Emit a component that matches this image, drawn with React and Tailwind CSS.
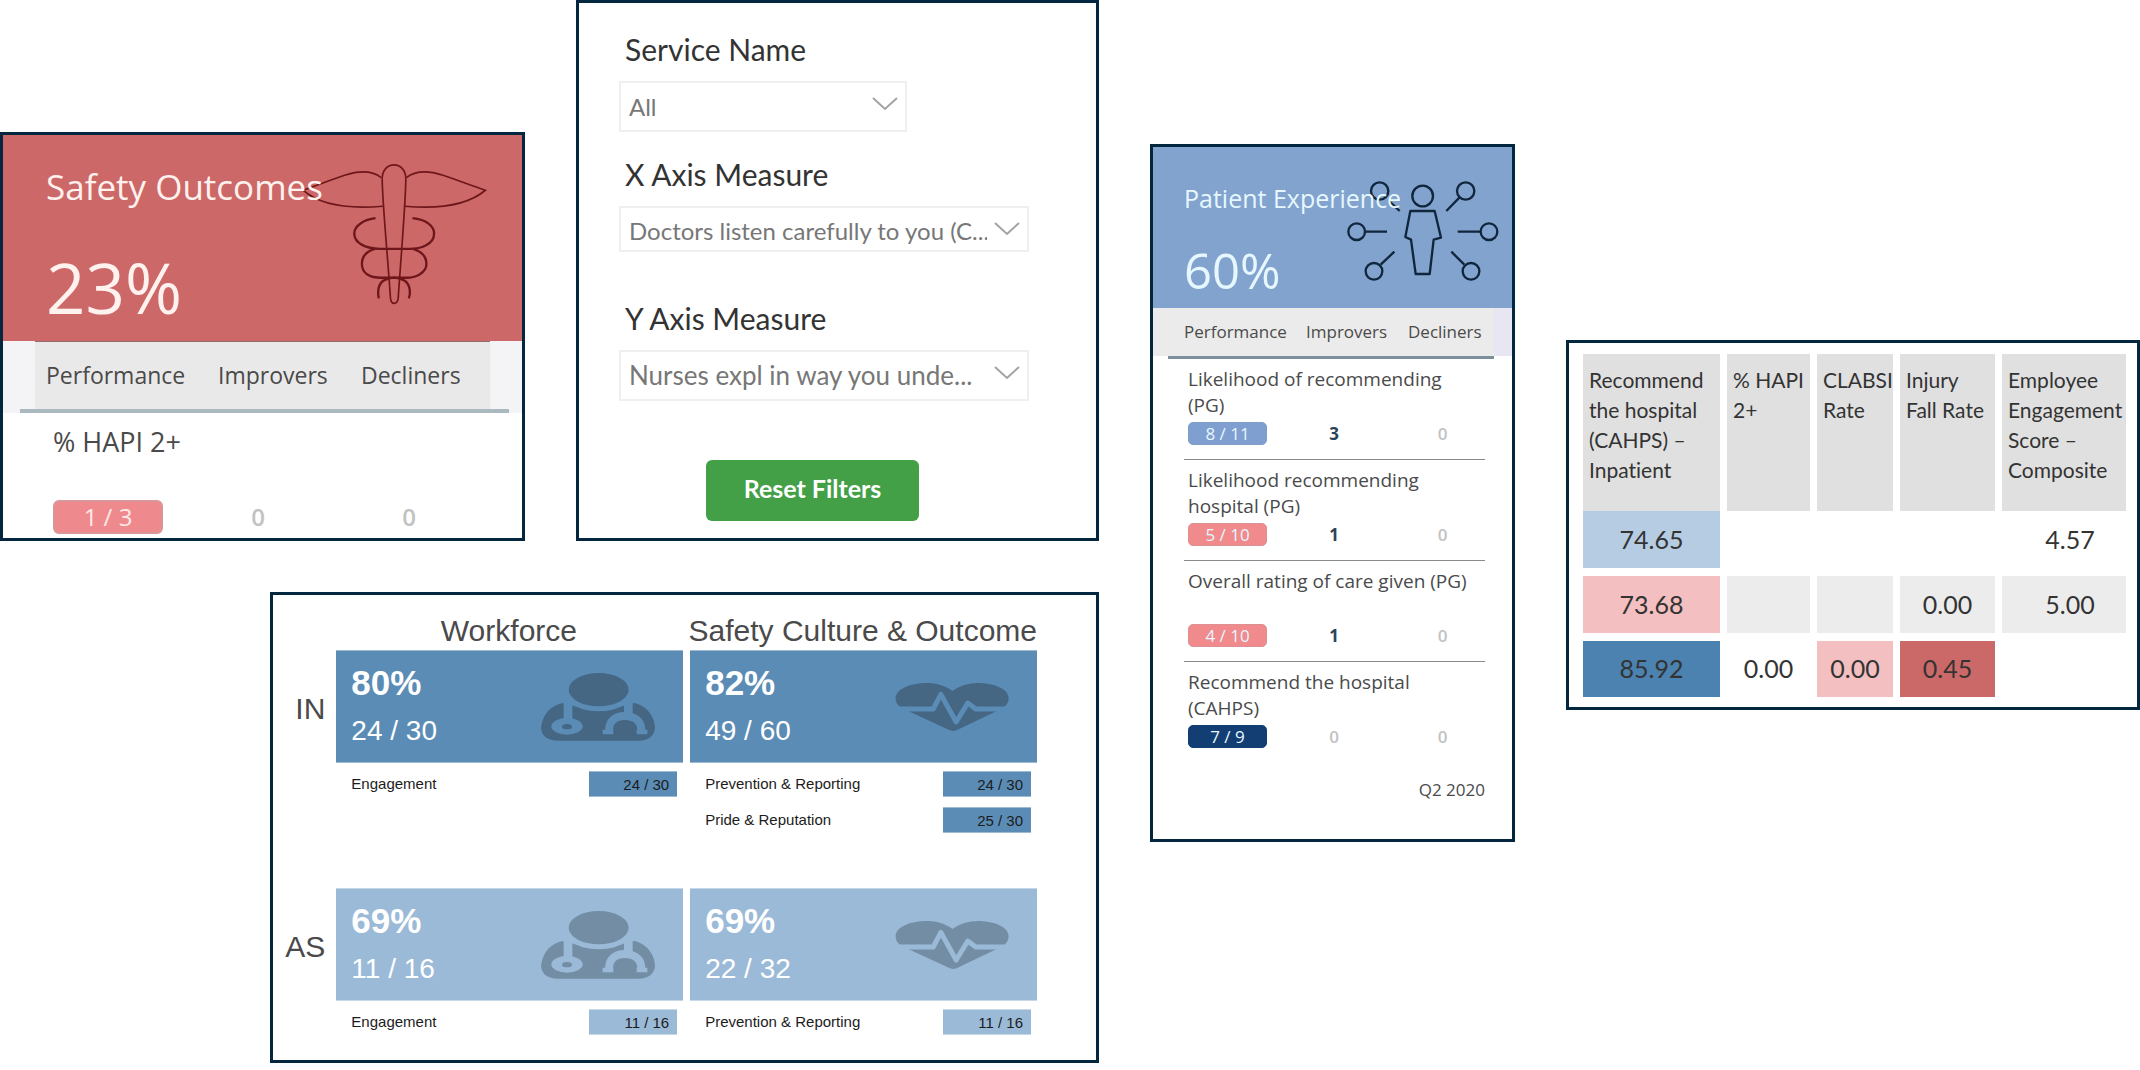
import { useState } from "react";

const patientMeasures = [
  { name: "Likelihood of recommending (PG)", score: "8 / 11", improvers: 3, decliners: 0, pill: "bg-[#7f9fd0] border-[#7f9fc4]" },
  { name: "Likelihood recommending hospital (PG)", score: "5 / 10", improvers: 1, decliners: 0, pill: "bg-[#f08a8c] border-[#dc9092]" },
  { name: "Overall rating of care given (PG)", score: "4 / 10", improvers: 1, decliners: 0, pill: "bg-[#f08a8c] border-[#dc9092]" },
  { name: "Recommend the hospital (CAHPS)", score: "7 / 9", improvers: 0, decliners: 0, pill: "bg-[#123e73] border-[#123e73]" },
];

const scoreRows = [
  {
    unit: "IN",
    tile: "bg-[#5b8cb5] border-[#9dbad3]",
    icon: "fill-[#456783]",
    cut: "stroke-[#5b8cb5]",
    cutFill: "fill-[#5b8cb5]",
    groups: [
      { kind: "doctor", percent: "80%", ratio: "24 / 30", items: [["Engagement", "24 / 30"]] },
      {
        kind: "heart",
        percent: "82%",
        ratio: "49 / 60",
        items: [["Prevention & Reporting", "24 / 30"], ["Pride & Reputation", "25 / 30"]],
      },
    ],
  },
  {
    unit: "AS",
    tile: "bg-[#9bbad7] border-[#c6d8e8]",
    icon: "fill-[#738da4]",
    cut: "stroke-[#9bbad7]",
    cutFill: "fill-[#9bbad7]",
    groups: [
      { kind: "doctor", percent: "69%", ratio: "11 / 16", items: [["Engagement", "11 / 16"]] },
      { kind: "heart", percent: "69%", ratio: "22 / 32", items: [["Prevention & Reporting", "11 / 16"]] },
    ],
  },
];

const heatmapColumns = [
  { label: "Recommend the hospital (CAHPS) – Inpatient", width: "w-[137px]" },
  { label: "% HAPI 2+", width: "w-[83px]" },
  { label: "CLABSI Rate", width: "w-[76px]" },
  { label: "Injury\nFall Rate", width: "w-[95px]" },
  { label: "Employee Engagement Score – Composite", width: "w-[124px]" },
];

const heatmapRows = [
  [["74.65", "bg-[#b6cce3]"], ["", ""], ["", ""], ["", ""], ["4.57", ""]],
  [["73.68", "bg-[#f4bfc0]"], ["", "bg-[#ececec]"], ["", "bg-[#ececec]"], ["0.00", "bg-[#ececec]"], ["5.00", "bg-[#ececec]"]],
  [["85.92", "bg-[#4b82b0]"], ["0.00", ""], ["0.00", "bg-[#f4bfc0]"], ["0.45", "bg-[#cb6868]"], ["", ""]],
];

function CaduceusIcon({ className }) {
  return (
    <svg viewBox="-24 36 556 428" className={className} fill="none" stroke="#6e161c" aria-hidden="true">
      <g strokeWidth="5">
        <path d="M290 82C320 58 360 62 400 75C450 92 490 108 527 120C480 160 400 178 285 168" />
        <path d="M214 82C184 58 144 62 104 75C54 92 14 108 -21 120C24 160 104 178 219 168" />
        <path d="M217 85C217 30 288 30 288 85C288 150 275 300 265 445C262 465 244 465 242 445C232 300 217 150 217 85Z" />
      </g>
      <g strokeWidth="7">
        <path d="M308 204C350 208 373 228 373 250C373 285 330 296 300 296H210C170 296 133 280 133 250C133 225 165 208 197 204" />
        <path d="M310 296C340 305 350 320 350 342C350 370 315 383 290 383H215C180 383 156 370 156 342C156 318 170 303 195 296" />
        <path d="M207 445C203 430 203 405 220 392C240 380 265 380 285 392C302 405 303 430 297 445" />
      </g>
    </svg>
  );
}

function PersonNetworkIcon({ className }) {
  return (
    <svg viewBox="620 138 456 300" className={className} fill="none" stroke="#10263d" strokeWidth="7" aria-hidden="true">
      <circle cx="718" cy="168" r="26" />
      <circle cx="976" cy="168" r="26" />
      <circle cx="649" cy="290" r="25" />
      <circle cx="1046" cy="290" r="25" />
      <circle cx="701" cy="409" r="25" />
      <circle cx="992" cy="409" r="25" />
      <circle cx="847" cy="183" r="31" />
      <path d="M748 200L778 228M957 188L918 228M676 290H740M1020 290H952M721 389L762 350M972 389L933 350" />
      <path strokeLinejoin="round" d="M810 228H883L902 308L880 314L868 417H826L812 314L795 306Z" />
    </svg>
  );
}

function DoctorIcon({ row }) {
  return (
    <svg viewBox="845 265 342 204" className="h-[68px] w-[114px]" fill="none" aria-hidden="true">
      <ellipse className={row.icon} cx="1018" cy="315" rx="90" ry="50" />
      <path
        className={row.icon}
        d="M845 430C850 388 875 362 910 355C930 358 950 366 970 374C1000 382 1040 382 1065 374C1085 366 1105 358 1125 355C1160 362 1187 395 1187 430C1185 455 1165 468 1140 468H895C865 468 848 455 845 430Z"
      />
      <path className={row.cut} strokeWidth="26" d="M926 350V405M1107 350V400" />
      <ellipse className={row.cutFill} cx="923" cy="425" rx="47" ry="25" />
      <ellipse className={row.icon} cx="923" cy="426" rx="15" ry="8" />
      <path className={row.cut} strokeWidth="24" d="M1049 448V438C1049 404 1073 394 1096 394C1119 394 1146 404 1146 438V448" />
      <path className={row.cut} strokeWidth="14" d="M1030 442H1062M1132 442H1164" />
    </svg>
  );
}

function HeartIcon({ row }) {
  return (
    <svg viewBox="645 290 343 148" className="h-[50px] w-[114px]" fill="none" aria-hidden="true">
      <path
        className={row.icon}
        d="M818 316C795 298 765 291 735 292C685 294 647 312 647 338C647 352 655 362 665 367L805 432Q820 441 835 432L970 367C980 360 987 350 987 338C987 312 950 294 900 292C870 291 840 300 818 316Z"
      />
      <path className={row.cut} strokeWidth="15" strokeLinejoin="round" d="M640 370H760L783 326L829 409L864 352L888 370H995" />
    </svg>
  );
}

function SafetyCard() {
  return (
    <section className="self-end overflow-hidden border-3 border-[#02273f] bg-white font-['Open_Sans',sans-serif] text-[#4a4a4a]">
      <div className="relative h-[206px] bg-[#cc6867] pt-8 pl-[43px] text-[#fff1ee]">
        <CaduceusIcon className="absolute top-[27px] right-[35px] h-[143px] w-[185px]" />
        <h2 className="relative text-[35px] leading-10">Safety Outcomes</h2>
        <p className="mt-11 text-[69px] leading-[72px]">23%</p>
      </div>
      <div className="bg-[#f4f4f7]">
        <div className="mx-8 grid h-[68px] grid-cols-[172px_143px_1fr] items-center border-t border-[#9a6b6b] bg-[#e9e9e9] pl-[11px] text-[23px]">
          <span>Performance</span>
          <span>Improvers</span>
          <span>Decliners</span>
        </div>
        <hr className="mr-[13px] ml-[17px] h-1 border-0 bg-[#aab8c0]" />
      </div>
      <div className="pt-[13px] pr-[37px] pb-1 pl-[50px]">
        <h3 className="text-[27px] leading-8">% HAPI 2+</h3>
        <div className="mt-[42px] grid grid-cols-[130px_150px_1fr] items-center text-center text-2xl">
          <span className="h-[34px] w-[110px] rounded-md border-2 border-[#d99597] bg-[#ee8a8e] leading-[30px] text-[#ffe9e6]">
            1 / 3
          </span>
          <span className="font-semibold text-[#c2c2c2]">0</span>
          <span className="font-semibold text-[#c2c2c2]">0</span>
        </div>
      </div>
    </section>
  );
}

function FilterSelect({ id, label, value, onChange, options, labelClass, boxClass, selectClass }) {
  return (
    <div className={labelClass}>
      <label htmlFor={id} className="block pl-[6px] text-[30px] leading-10 text-[#333]">
        {label}
      </label>
      <div className={`relative mt-3 ${boxClass}`}>
        <select
          id={id}
          value={value}
          onChange={(event) => onChange(event.target.value)}
          className={`w-full appearance-none border-2 border-[#efefef] bg-white pr-10 pl-2 text-[#777] ${selectClass}`}
        >
          {options.map((option) => (
            <option key={option}>{option}</option>
          ))}
        </select>
        <svg viewBox="0 0 26 14" className="pointer-events-none absolute top-4 right-[9px] h-[14px] w-[26px]" fill="none" stroke="#a3a3a3" strokeWidth="2" aria-hidden="true">
          <path d="M1 1L13 12L25 1" />
        </svg>
      </div>
    </div>
  );
}

const defaultFilters = {
  service: "All",
  x: "Doctors listen carefully to you (C...",
  y: "Nurses expl in way you unde...",
};

function FilterCard() {
  const [filters, setFilters] = useState(defaultFilters);
  const update = (key) => (value) => setFilters({ ...filters, [key]: value });

  return (
    <section className="border-3 border-[#02273f] bg-white px-10 pt-[26px] pb-[17px] font-['Lato',sans-serif] [font-variant-ligatures:none]">
      <FilterSelect
        id="service"
        label="Service Name"
        value={filters.service}
        onChange={update("service")}
        options={[defaultFilters.service]}
        labelClass=""
        boxClass="w-[288px]"
        selectClass="h-[51px] text-2xl"
      />
      <FilterSelect
        id="x-axis"
        label="X Axis Measure"
        value={filters.x}
        onChange={update("x")}
        options={[defaultFilters.x, defaultFilters.y]}
        labelClass="mt-[22px]"
        boxClass="max-w-[410px]"
        selectClass="h-[46px] pt-1 text-2xl"
      />
      <FilterSelect
        id="y-axis"
        label="Y Axis Measure"
        value={filters.y}
        onChange={update("y")}
        options={[defaultFilters.y, defaultFilters.x]}
        labelClass="mt-[46px]"
        boxClass="max-w-[410px]"
        selectClass="h-[51px] text-[26px]"
      />
      <button
        type="button"
        className="mt-[59px] ml-[87px] block h-[61px] w-[213px] rounded-md bg-[#43a047] pb-1 text-[25px] font-bold text-white"
        onClick={() => setFilters(defaultFilters)}
      >
        Reset Filters
      </button>
    </section>
  );
}

function ScoreGroup({ row, group }) {
  return (
    <div>
      <div className={`flex h-[113px] items-center justify-between border-y pr-7 pl-[15px] text-white ${row.tile}`}>
        <div>
          <p className="text-[35px] leading-9 font-bold">{group.percent}</p>
          <p className="mt-3 text-[28px] leading-9">{group.ratio}</p>
        </div>
        {group.kind === "doctor" ? <DoctorIcon row={row} /> : <HeartIcon row={row} />}
      </div>
      <ul className="mt-2 space-y-[10px] pr-[6px] pl-[15px] text-[15px] leading-[26px] text-[#1c1c1c]">
        {group.items.map(([name, score]) => (
          <li key={name} className="flex items-center justify-between">
            <span>{name}</span>
            <span className={`h-[26px] w-[88px] border-y pr-2 text-right ${row.tile}`}>{score}</span>
          </li>
        ))}
      </ul>
    </div>
  );
}

function ScorecardPanel() {
  return (
    <section className="mt-[51px] ml-[24.6%] border-3 border-[#02273f] bg-white pt-[18px] pr-[59px] pb-[25px] font-['Liberation_Sans',sans-serif] text-[#4a4a4a]">
      <div className="grid grid-cols-[56px_1fr_1fr] gap-x-[7px] text-center text-[30px] leading-9">
        <span />
        <h2>Workforce</h2>
        <h2 className="whitespace-nowrap">Safety Culture &amp; Outcome</h2>
      </div>
      <div className="mt-px space-y-[55px]">
        {scoreRows.map((row) => (
          <div key={row.unit} className="grid grid-cols-[56px_1fr_1fr] gap-x-[7px]">
            <h3 className="pr-1 text-right text-[30px] leading-[117px]">{row.unit}</h3>
            {row.groups.map((group) => (
              <ScoreGroup key={group.kind} row={row} group={group} />
            ))}
          </div>
        ))}
      </div>
    </section>
  );
}

function PatientCard() {
  return (
    <section className="mt-36 border-3 border-[#02273f] bg-white pb-[37px] font-['Open_Sans',sans-serif] text-[#4a4a4a]">
      <div className="relative h-[161px] bg-[#82a3cd] pt-[35px] pl-[31px] text-[#e6f7ff]">
        <PersonNetworkIcon className="absolute top-[34px] right-[13px] h-[100px] w-[152px]" />
        <h2 className="relative text-[25px] leading-8">Patient Experience</h2>
        <p className="mt-7 text-[49px] leading-14">60%</p>
      </div>
      <div className="bg-linear-to-r from-[#ebebeb] from-95% to-[#e9e6f3] to-95%">
        <div className="grid h-[48px] grid-cols-[122px_102px_1fr] items-center pl-[31px] text-[17px]">
          <span>Performance</span>
          <span>Improvers</span>
          <span>Decliners</span>
        </div>
      </div>
      <hr className="mr-[18px] ml-[15px] h-[3px] border-0 bg-[#7b8f9c]" />
      <ul className="mr-[27px] ml-[31px] divide-y divide-[#8a8a8a]">
        {patientMeasures.map((measure) => (
          <li key={measure.name} className="pt-[7px] pb-[14px] pl-1">
            <h3 className="min-h-[52px] pr-2 text-[19px] leading-[26px]">{measure.name}</h3>
            <div className="mt-1 grid grid-cols-[92px_108px_1fr] items-center text-center text-[17px]">
              <span className={`h-[23px] w-[79px] rounded-[5px] border leading-[21px] text-[#e6f7ff] ${measure.pill}`}>
                {measure.score}
              </span>
              <span className={measure.improvers ? "leading-5 font-bold text-[#2c4257]" : "leading-5 font-semibold text-[#c2c2c2]"}>
                {measure.improvers}
              </span>
              <span className="pl-3 leading-5 font-semibold text-[#c2c2c2]">{measure.decliners}</span>
            </div>
          </li>
        ))}
      </ul>
      <p className="mt-4 mr-[27px] text-right text-[17px] leading-6">Q2 2020</p>
    </section>
  );
}

function HeatmapCard() {
  return (
    <section className="mt-[340px] self-start border-3 border-[#02273f] bg-white pt-[11px] pr-1 pb-[10px] pl-[7px] font-['Lato',sans-serif] text-[#333] [font-variant-ligatures:none]">
      <table className="w-full table-fixed border-separate border-spacing-x-[7px] border-spacing-y-0">
        <thead>
          <tr>
            {heatmapColumns.map((column) => (
              <th
                key={column.label}
                scope="col"
                className={`h-[157px] bg-[#e0e0e0] pt-[11px] pl-[6px] text-left align-top text-[21px] leading-[30px] font-normal whitespace-pre-line ${column.width}`}
              >
                {column.label}
              </th>
            ))}
          </tr>
        </thead>
        <tbody>
          {heatmapRows.map((cells) => (
            <tr key={cells[0][0]} className="group">
              {cells.map(([value, color], index) => (
                <td
                  key={index}
                  className={`h-[65px] border-b-8 border-white bg-clip-padding text-center text-[25px] group-last:h-[56px] group-last:border-b-0 last:pl-3 ${color}`}
                >
                  {value}
                </td>
              ))}
            </tr>
          ))}
        </tbody>
      </table>
    </section>
  );
}

export default function App() {
  return (
    <main className="grid min-h-screen grid-cols-[1099fr_365fr_574fr] items-start gap-x-[51px] bg-white">
      <div>
        <div className="grid grid-cols-[525fr_523fr] gap-x-[51px]">
          <SafetyCard />
          <FilterCard />
        </div>
        <ScorecardPanel />
      </div>
      <PatientCard />
      <HeatmapCard />
    </main>
  );
}
